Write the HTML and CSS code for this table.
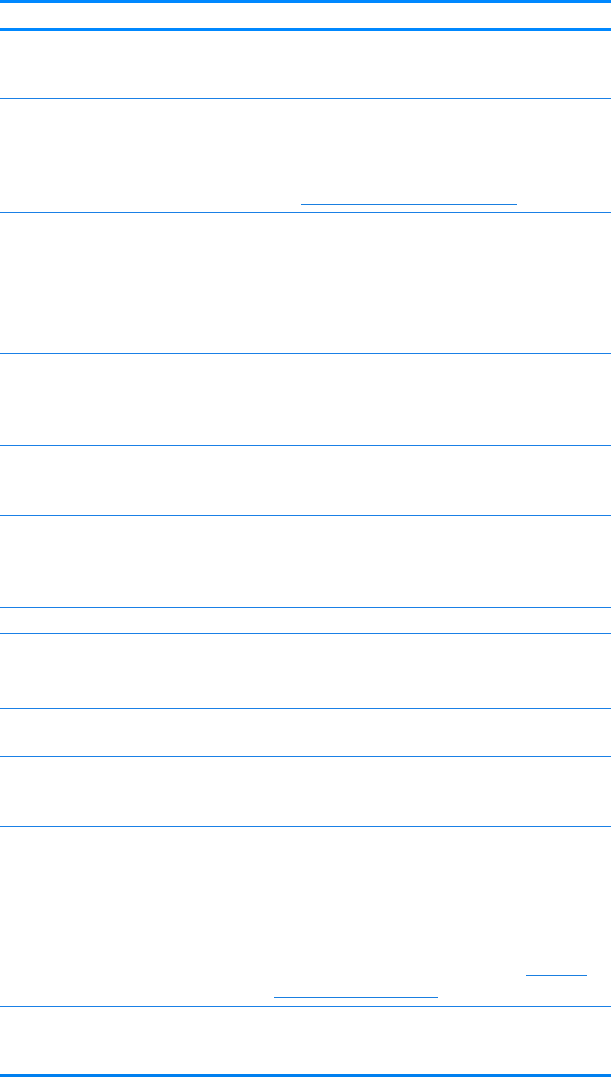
FILE: index.html
```html
<!DOCTYPE html>
<html>
<head>
<meta charset="utf-8">
<link rel="stylesheet" href="styles.css">
</head>
<body>
<div class="table">
  <div class="row head h25"></div>
  <div class="row h67"></div>
  <div class="row h113 links">
    <a class="link l1" href="#"></a>
  </div>
  <div class="row h140"></div>
  <div class="row h91"></div>
  <div class="row h69"></div>
  <div class="row h91"></div>
  <div class="row h25"></div>
  <div class="row h74"></div>
  <div class="row h47"></div>
  <div class="row h69"></div>
  <div class="row h179 links">
    <a class="link l2" href="#"></a>
    <a class="link l3" href="#"></a>
  </div>
  <div class="row h67 last"></div>
</div>
</body>
</html>
```
FILE: styles.css
```css
html, body {
  margin: 0;
  padding: 0;
  background: #ffffff;
  font-family: "Liberation Sans", Arial, sans-serif;
}
.table {
  width: 611px;
  display: flex;
  flex-direction: column;
  border-top: 3px solid #0088ff;
}
.row {
  box-sizing: content-box;
  border-bottom: 1px solid #1a80e6;
}
.row.head {
  border-bottom: 3px solid #0088ff;
}
.row.last {
  border-bottom: 3px solid #0080f0;
}
.h25 { height: 25px; }
.h47 { height: 47px; }
.h67 { height: 67px; }
.h69 { height: 69px; }
.h74 { height: 74px; }
.h91 { height: 91px; }
.h113 { height: 113px; }
.h140 { height: 140px; }
.h179 { height: 179px; }
.links {
  display: flex;
  flex-direction: column;
  justify-content: flex-end;
}
.link {
  display: block;
  height: 0;
  border-bottom: 1px solid #1a7fe0;
}
.l1 { margin-left: 301px; width: 216px; margin-bottom: 7px; }
.l2 { margin-left: 526px; width: 61px; margin-bottom: 21px; }
.l3 { margin-left: 274px; width: 164px; margin-bottom: 8px; }
```
